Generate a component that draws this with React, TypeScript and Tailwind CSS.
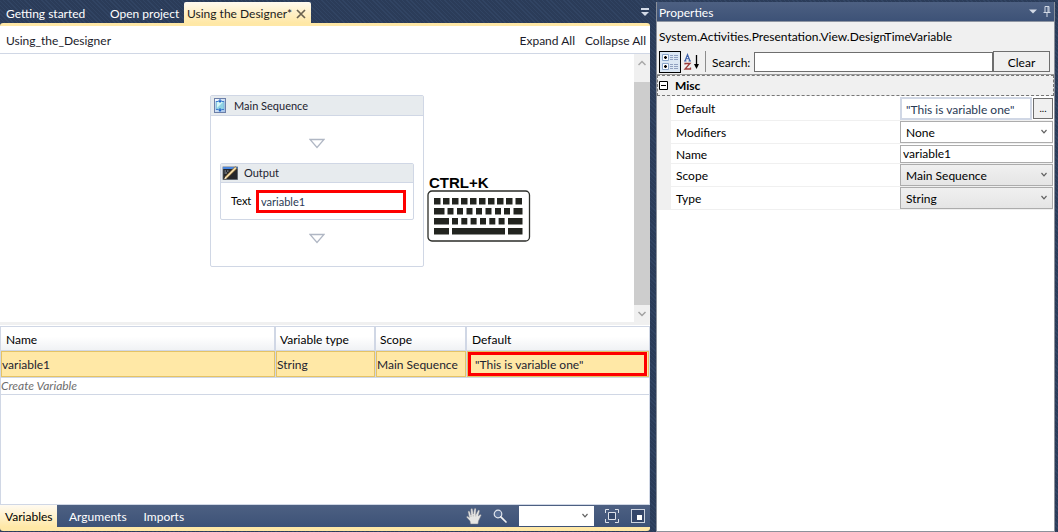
import React, { useState } from "react";

const hatch =
  "bg-[#2b3c59] bg-[repeating-linear-gradient(45deg,#314463_0px,#314463_1px,#2b3c59_1px,#2b3c59_3px)]";

function SequenceIcon() {
  return (
    <svg className="h-4 w-4 shrink-0" viewBox="0 0 16 16" aria-hidden="true">
      <defs>
        <linearGradient id="seq" x1="0" y1="0" x2="1" y2="1">
          <stop offset="0" stopColor="#ffffff" />
          <stop offset="1" stopColor="#9dbfe8" />
        </linearGradient>
      </defs>
      <rect x="2.5" y=".5" width="11" height="14" fill="url(#seq)" stroke="#6c7fa8" />
      <rect x="4" y="3.500" width="8" height="8" fill="#8fd3e4" stroke="#7eaed6" strokeWidth=".8" />
      <path d="M5 4h6l-3 3-3 3z" fill="#d3f6f6" />
      <path d="M6 2.500h4L8 5zM6 11.500h4L8 14z" fill="#1f62c8" />
      <path d="M8 1v2M8 10v2" stroke="#1f62c8" />
      <path d="M4 3.500h2M10 3.500h2M4 11.500h2M10 11.500h2" stroke="#3f7bd0" />
    </svg>
  );
}

function OutputIcon() {
  return (
    <svg className="h-4 w-4 shrink-0" viewBox="0 0 16 16" aria-hidden="true">
      <rect x="1" y="2" width="14.500" height="12.500" fill="#25272b" stroke="#59616d" strokeWidth=".8" />
      <path d="M1 2h14.500v2H1z" fill="#4a86de" />
      <path d="M2.500 6h1.500M5 6h1.500M2.500 8h2.500" stroke="#9ba3ad" />
      <path d="M2.300 14.300L3.500 11.300 13 1.700l2 1.800-9.800 9.600z" fill="#e8c98c" stroke="#5d4319" strokeWidth=".6" />
      <path d="M4.400 12.200L14 2.600" stroke="#fbedc6" strokeWidth=".9" />
      <path d="M2.300 14.300l1-2.500 1.500 1.400z" fill="#f9f1e2" />
    </svg>
  );
}

function DropArrow() {
  return (
    <svg className="h-3 w-4" viewBox="0 0 16 12" aria-hidden="true">
      <path d="M1 1.500h14L8 9.500z" fill="#fff" stroke="#b0b7c4" strokeWidth="1.300" />
    </svg>
  );
}

function KeyboardIcon() {
  const key = "#22241f";
  return (
    <svg className="h-[52px] w-[104px]" viewBox="0 0 104 52" aria-hidden="true">
      <rect x="1" y="1" width="101.500" height="50" rx="4" fill="#fff" stroke="#2b2d29" strokeWidth="1.300" />
      {[7, 16, 25, 34, 43, 52, 61, 70, 79, 88.500].map((x) => (
        <rect key={x} x={x} y="8" width="6.500" height="6.500" fill={key} />
      ))}
      <rect x="7" y="18" width="10.500" height="6.500" fill={key} />
      {[20.500, 30, 39.500, 49, 58.500, 68, 77].map((x) => (
        <rect key={x} x={x} y="18" width="6" height="6.500" fill={key} />
      ))}
      <rect x="86.500" y="18" width="9" height="6.500" fill={key} />
      <rect x="7" y="28" width="15" height="6.500" fill={key} />
      {[25, 34.300, 43.600, 53, 62.300, 71.600].map((x) => (
        <rect key={x} x={x} y="28" width="6" height="6.500" fill={key} />
      ))}
      <rect x="81" y="28" width="14.500" height="6.500" fill={key} />
      <rect x="7" y="38" width="15" height="6.500" fill={key} />
      <rect x="25" y="38" width="53" height="6.500" fill={key} />
      <rect x="81" y="38" width="14.500" height="6.500" fill={key} />
    </svg>
  );
}

function Chevron() {
  return (
    <svg className="pointer-events-none absolute top-1/2 right-[6px] h-[6px] w-[6px] -translate-y-1/2" viewBox="0 0 6 6" aria-hidden="true">
      <path d="M.5 1L3 3.800 5.500 1" fill="none" stroke="#606060" strokeWidth="1.200" />
    </svg>
  );
}

function Editor() {
  return (
    <main className="flex min-w-0 flex-1 flex-col">
      <nav className="flex h-[23px] items-end pl-[6px] text-white">
        <button className="mb-[1px] w-[104px] text-left">Getting started</button>
        <button className="mb-[1px] w-[74px] text-left whitespace-nowrap">Open project</button>
        <div className="flex h-[21px] w-[127px] items-center justify-between rounded-t-[2px] bg-linear-to-b from-[#fffaf0] via-[#fff0c8] to-[#ffe8a6] pt-[2px] pr-[5px] pl-[3px] text-[#1c1c1c]">
          <button className="whitespace-nowrap">Using the Designer*</button>
          <button aria-label="Close tab">
            <svg className="h-[10px] w-[10px]" viewBox="0 0 10 10">
              <path d="M1 1l8 8M9 1L1 9" stroke="#6a6250" strokeWidth="1.700" />
            </svg>
          </button>
        </div>
        <button className="mr-[1px] mb-[7px] ml-auto" aria-label="Open documents">
          <svg className="h-2 w-2" viewBox="0 0 8 8">
            <path d="M0 0h8v2H0zM0 4h8L4 8z" fill="#d3dae6" />
          </svg>
        </button>
      </nav>
      <div className="h-[3px] rounded-t-[3px] bg-[#ffe8a6]" />

      <header className="flex h-[28px] items-center justify-between border-b border-[#d0d7e5] bg-white pt-[2px] pr-[4px] pl-[6px] text-[#1b1b2b]">
        <span>Using_the_Designer</span>
        <div className="flex gap-[10px]">
          <button>Expand All</button>
          <button>Collapse All</button>
        </div>
      </header>

      <section className="flex h-[268px] bg-white">
        <div className="flex min-w-0 flex-1 justify-center pt-[41px] text-[11px]">
          <div className="relative h-[172px] w-[214px] rounded-[2px] border border-[#d0d7e5]">
            <h2 className="flex h-[20px] items-center gap-[6px] border-b border-[#d0d7e5] bg-[#e7ebee] pl-[1px] text-[#1d2330]">
              <SequenceIcon />
              Main Sequence
            </h2>
            <div className="flex flex-col items-center px-[9px] pt-[22px]">
              <DropArrow />
              <div className="mt-[13px] w-full rounded-[2px] border border-[#d0d7e5]">
                <h3 className="flex h-[19px] items-center gap-[6px] border-b border-[#d0d7e5] bg-[#e7ebee] pl-[1px] text-[#1d2330]">
                  <OutputIcon />
                  Output
                </h3>
                <label className="flex h-[36px] items-center justify-between pr-[7px] pl-[10px]">
                  Text
                  <input className="h-[23px] w-[150px] border-3 border-[#fe0000] px-[2px] text-[#2a3a55]" defaultValue="variable1" />
                </label>
              </div>
              <div className="mt-[13px] flex">
                <DropArrow />
              </div>
            </div>
            <div className="absolute top-[78px] left-[216px]">
              <p className="pt-[1px] pl-[2px] font-['Liberation_Sans',sans-serif] text-[15px] leading-[15px] font-bold">CTRL+K</p>
              <KeyboardIcon />
            </div>
          </div>
        </div>
        <div className="flex w-4 flex-col bg-[#f0f0f0]">
          <button className="flex h-[28px] justify-center pt-[6px]" aria-label="Scroll up">
            <svg className="h-[6px] w-[8px]" viewBox="0 0 8 6">
              <path d="M.5 5L4 1.500 7.500 5" fill="none" stroke="#a8a8a8" strokeWidth="1.500" />
            </svg>
          </button>
          <div className="flex-1 bg-[#cdcdcd]" />
          <button className="flex h-[17px] items-center justify-center" aria-label="Scroll down">
            <svg className="h-[6px] w-[8px]" viewBox="0 0 8 6">
              <path d="M.5 1L4 4.500 7.500 1" fill="none" stroke="#a0a0a0" strokeWidth="1.500" />
            </svg>
          </button>
        </div>
      </section>

      <section className="flex flex-1 flex-col border-t-[3px] border-[#f0f0f0] bg-white">
        <div className="mt-[1px] flex-1 border border-[#d0d7e5]">
          <table className="w-full table-fixed border-separate border-spacing-0 text-left text-[#1d2330]">
            <colgroup>
              <col className="w-[275px]" />
              <col className="w-[100px]" />
              <col className="w-[91px]" />
              <col />
            </colgroup>
            <thead>
              <tr className="h-[24px] bg-linear-to-b from-white from-40% to-[#eff1f4] text-black">
                <th className="border-r-2 border-b border-[#d0d7e5] px-[5px] pt-[3px] pb-0 font-normal">Name</th>
                <th className="border-r-2 border-b border-[#d0d7e5] px-[4px] pt-[3px] pb-0 font-normal">Variable type</th>
                <th className="border-r-2 border-b border-[#d0d7e5] px-[4px] pt-[3px] pb-0 font-normal">Scope</th>
                <th className="border-b border-[#d0d7e5] px-[5px] pt-[3px] pb-0 font-normal">Default</th>
              </tr>
            </thead>
            <tbody>
              <tr className="whitespace-nowrap">
                <td className="border-r border-b border-[#d0d7e5] p-0">
                  <div className="flex h-[26px] items-center border border-[#e5c365] bg-[#ffe8a6] pt-[2px]">variable1</div>
                </td>
                <td className="border-r border-b border-[#d0d7e5] p-0">
                  <div className="flex h-[26px] items-center border border-[#e5c365] bg-[#ffe8a6] pt-[2px]">String</div>
                </td>
                <td className="border-r border-b border-[#d0d7e5] p-0">
                  <div className="flex h-[26px] items-center border border-[#e5c365] bg-[#ffe8a6] pt-[2px]">Main Sequence</div>
                </td>
                <td className="border-b border-[#d0d7e5] p-0">
                  <div className="h-[26px] border border-[#e5c365] bg-[#ffe8a6] pr-[1px]">
                    <div className="flex h-[24px] items-center border-3 border-[#fe0000] px-[4px] pt-[2px]">"This is variable one"</div>
                  </div>
                </td>
              </tr>
              <tr>
                <td colSpan={4} className="border-b border-[#d0d7e5] p-0 leading-[16px] text-[#6d6d6d] italic">Create Variable</td>
              </tr>
            </tbody>
          </table>
        </div>
      </section>

      <footer>
        <div className="flex h-[22px] items-center bg-linear-to-b from-[#4d6082] to-[#3d5277] text-white">
          <button className="h-full w-[57px] bg-linear-to-b from-[#fffaf0] to-[#ffe8a6] pt-[2px] pl-[5px] text-left text-black">Variables</button>
          <button className="ml-[12px] pt-[2px]">Arguments</button>
          <button className="ml-[17px] pt-[2px]">Imports</button>
          <div className="ml-auto flex h-full items-center">
            <button aria-label="Pan">
              <svg className="h-[18px] w-[16px]" viewBox="0 0 16 18">
                <path d="M4.500 17L4 14 .8 10.500C.2 9.500 1.200 8.800 2 9.400L3.300 10.500 2 5C1.900 3.800 3.300 3.500 3.700 4.600L5 8 4.800 2.500C4.900 1.200 6.500 1.200 6.700 2.500L7.300 7 8.300 1.900C8.600.8 10.200 1 10 2.300L9.800 7.500 12 3.600C12.600 2.600 13.800 3.200 13.500 4.300L12.300 9 13.800 7.700C14.800 7 15.700 7.900 15 8.800L12.500 14 12 17z" fill="#e6e6e4" stroke="#777b86" strokeWidth=".5" />
                <path d="M5 8v2M7.300 7.500v2M9.800 7.500v2" stroke="#999" strokeWidth=".5" />
              </svg>
            </button>
            <button className="ml-[11px]" aria-label="Zoom">
              <svg className="h-[15px] w-[15px]" viewBox="0 0 15 15">
                <circle cx="5" cy="5" r="3.800" fill="#5a7096" stroke="#dfe4ec" strokeWidth="1.200" />
                <path d="M7.800 7.800L13 13" stroke="#f4f4f4" strokeWidth="1.700" strokeLinecap="round" />
              </svg>
            </button>
            <div className="relative ml-[11px] h-[20px] w-[75px]">
              <select className="h-full w-full appearance-none bg-white" aria-label="Zoom level" />
              <Chevron />
            </div>
            <button className="ml-[11px]" aria-label="Fit to screen">
              <svg className="h-[14px] w-[14px]" viewBox="0 0 14 14">
                <path d="M3.500 3.500h7v7h-7z" fill="#34486c" stroke="#dce1ea" />
                <path d="M.5 4V.5H4M10 .5h3.500V4M13.500 10v3.500H10M4 13.500H.5V10" fill="none" stroke="#dce1ea" />
              </svg>
            </button>
            <button className="mr-[5px] ml-[12px]" aria-label="Overview">
              <svg className="h-[14px] w-[14px]" viewBox="0 0 14 14">
                <rect x=".5" y=".5" width="13" height="13" fill="#34466a" stroke="#cdd4e0" />
                <path d="M6 6h5v5H6z" fill="#fff" />
              </svg>
            </button>
          </div>
        </div>
        <div className="h-[4px] rounded-b-[3px] bg-[#ffe8a6]" />
        <div className="h-[1px]" />
      </footer>
    </main>
  );
}

const label = "w-[229px] shrink-0 pt-[2px] pl-[5px]";
const field = "relative flex min-w-0 flex-1";

function Properties() {
  const [open, setOpen] = useState(true);
  return (
    <aside className="mt-[2px] flex w-[399px] shrink-0 flex-col border border-t-0 border-[#8c919b] bg-white">
      <header className="flex h-[20px] items-center border-b border-[#8f96a3] bg-linear-to-b from-[#4d6082] to-[#3d5277] px-[2px] text-white">
        <h2 className="pt-[2px]">Properties</h2>
        <button className="ml-auto" aria-label="Window position">
          <svg className="h-[5px] w-[8px]" viewBox="0 0 8 5">
            <path d="M0 .5h8L4 4.500z" fill="#d3dae6" />
          </svg>
        </button>
        <button className="mr-[1px] ml-[6px]" aria-label="Auto hide">
          <svg className="h-[11px] w-[8px]" viewBox="0 0 8 11">
            <path d="M2 .5h4v6H2zM5 1v5M.5 6.500h7M4 7v4" fill="none" stroke="#d3dae6" />
          </svg>
        </button>
      </header>
      <div className="border-b border-[#999] bg-[#f0f0f0]">
        <p className="flex h-[29px] items-center pl-[2px]">System.Activities.Presentation.View.DesignTimeVariable</p>
        <div className="flex h-[23px] items-start pr-[4px] pl-[2px]">
          <button className="flex h-[22px] w-[22px] items-center justify-center border border-black bg-[#dbe7f4]" aria-label="Categorized">
            <svg className="h-[18px] w-[18px]" viewBox="0 0 18 18">
              <path d="M1.500 1.500h6v6h-6zM1.500 10.500h6v6h-6z" fill="#fff" stroke="#8aa5c8" />
              <path d="M3 4.500h3M4.500 3v3M3 13.500h3M4.500 12v3" stroke="#000" strokeWidth="1.300" />
              <path d="M9 2.500h3M13 2.500h4M9 4.500h3M13 4.500h4M9 6.500h3M13 6.500h4M9 11.500h3M13 11.500h4M9 13.500h3M13 13.500h4M9 15.500h3M13 15.500h4" stroke="#8fa0c0" />
            </svg>
          </button>
          <button className="ml-[2px] flex h-[22px] w-[18px] items-center" aria-label="Alphabetical">
            <svg className="h-[18px] w-[18px]" viewBox="0 0 18 18">
              <path d="M1 8h2.500M5.500 8H8M2 8L4.500 1.500 7 8M3 5.800h3" fill="none" stroke="#3b5ea8" strokeWidth="1.100" />
              <path d="M2 11.500V10.500h5L2 16h5.500v-1.500" fill="none" stroke="#9b3b3b" strokeWidth="1.300" />
              <path d="M13.500 2v12" stroke="#000" strokeWidth="1.300" />
              <path d="M11 11h5l-2.500 5z" fill="#000" />
            </svg>
          </button>
          <span className="ml-[4px] h-[21px] w-[1px] bg-[#8c8c8c]" />
          <label className="ml-[6px] flex min-w-0 flex-1 items-center">
            <span className="w-[42px] shrink-0 pt-[2px]">Search:</span>
            <input className="mt-[1px] h-[20px] min-w-0 flex-1 border border-[#6e6e6e] bg-white" />
          </label>
          <button className="h-[21px] w-[57px] border border-[#6e6e6e] bg-[#f0f0f0] pt-[2px]">Clear</button>
        </div>
      </div>
      <button
        className="flex h-[21px] items-center border border-dashed border-[#777] bg-[#f0f0f0] pl-[1px] font-bold"
        onClick={() => setOpen(!open)}
        aria-expanded={open}
      >
        <svg className="mr-[7px] h-[9px] w-[9px]" viewBox="0 0 9 9">
          <path d="M.5 .5h8v8h-8zM2 4.500h5" fill="#fff" stroke="#000" />
        </svg>
        <span className="pt-[1px]">Misc</span>
      </button>
      {open && (
        <div className="border-l-[14px] border-[#f0f0f0] pr-[1px]">
          <div className="flex h-[25px] items-center border-b border-[#f0f0f0]">
            <label htmlFor="default" className={label}>Default</label>
            <div className={field}>
              <input id="default" className="h-[23px] min-w-0 flex-1 border-2 border-[#d0d7e5] px-[4px] pt-[2px] text-[#2a3a55]" defaultValue='"This is variable one"' />
              <button className="ml-[1px] h-[21px] w-[20px] self-center border border-[#6e6e6e] bg-[#f0f0f0] text-[10px]" aria-label="Edit expression">...</button>
            </div>
          </div>
          <div className="flex h-[23px] items-center border-b border-[#f0f0f0]">
            <label htmlFor="modifiers" className={label}>Modifiers</label>
            <div className={field}>
              <select id="modifiers" className="h-[22px] w-full appearance-none border border-[#acacac] bg-white px-[5px] pt-[2px]">
                <option>None</option>
              </select>
              <Chevron />
            </div>
          </div>
          <div className="flex h-[20px] items-center border-b border-[#f0f0f0]">
            <label htmlFor="name" className={label}>Name</label>
            <div className={field}>
              <input id="name" className="h-[18px] w-full border border-[#acacac] px-[2px]" defaultValue="variable1" />
            </div>
          </div>
          <div className="flex h-[23px] items-center border-b border-[#f0f0f0]">
            <label htmlFor="scope" className={label}>Scope</label>
            <div className={field}>
              <select id="scope" className="h-[22px] w-full appearance-none border border-[#acacac] bg-linear-to-b from-[#f0f0f0] to-[#e5e5e5] px-[5px] pt-[2px]">
                <option>Main Sequence</option>
              </select>
              <Chevron />
            </div>
          </div>
          <div className="flex h-[23px] items-center border-b border-[#f0f0f0]">
            <label htmlFor="type" className={label}>Type</label>
            <div className={field}>
              <select id="type" className="h-[22px] w-full appearance-none border border-[#acacac] bg-linear-to-b from-[#f0f0f0] to-[#e5e5e5] px-[5px] pt-[2px]">
                <option>String</option>
              </select>
              <Chevron />
            </div>
          </div>
        </div>
      )}
    </aside>
  );
}

export default function App() {
  return (
    <div className={`flex min-h-screen gap-[6px] pr-[3px] font-[Lato,sans-serif] text-[12px] leading-[16px] text-black ${hatch}`}>
      <Editor />
      <Properties />
    </div>
  );
}
